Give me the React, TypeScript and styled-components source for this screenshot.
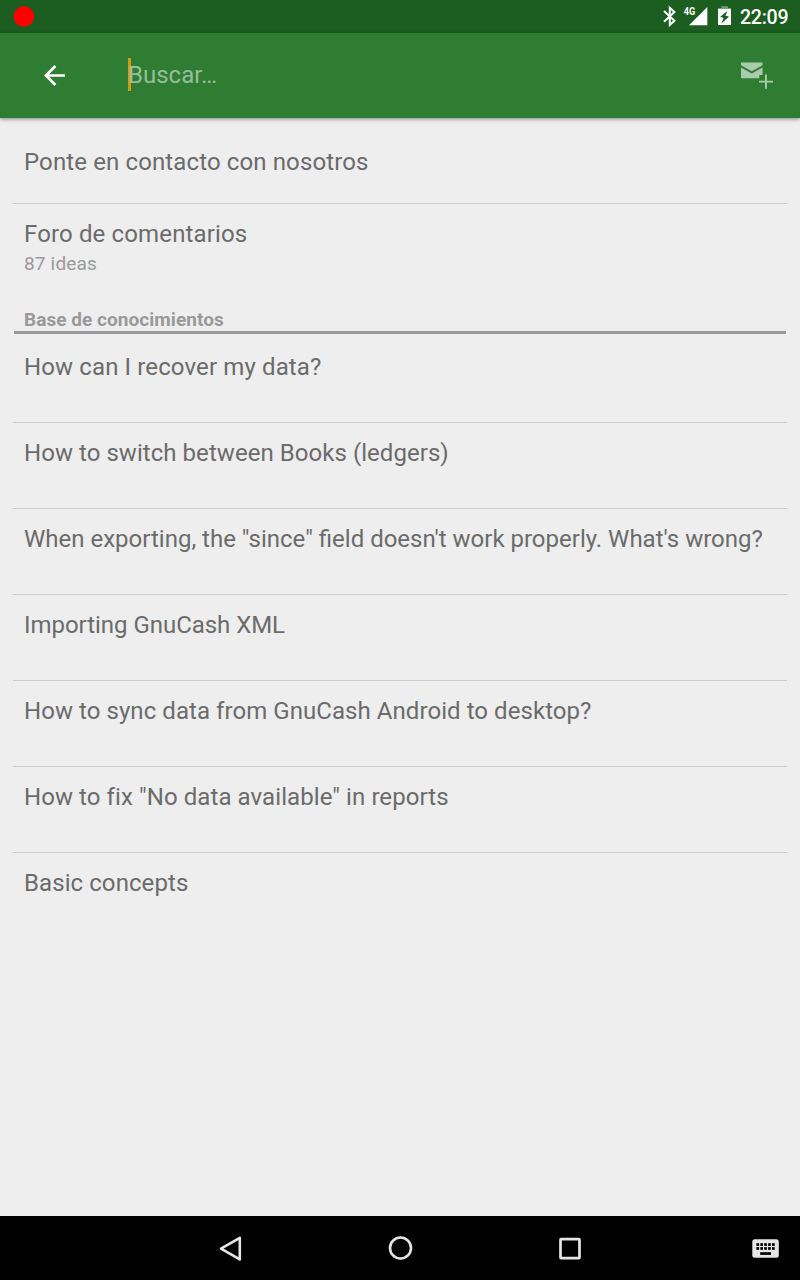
import React from "react";
import styled, { createGlobalStyle } from "styled-components";

const GlobalStyle = createGlobalStyle`
  * { box-sizing: border-box; }
  body { margin: 0; background: #eeeeee; font-family: Roboto, sans-serif; }
`;

const Screen = styled.div`
  display: flex;
  flex-direction: column;
  width: 800px;
  height: 1280px;
  overflow: hidden;
  background: #eeeeee;
`;

const StatusBar = styled.div`
  display: flex;
  align-items: center;
  flex: none;
  height: 33px;
  padding: 0 11px 0 13px;
  background: #1b5e20;
  color: #fff;
`;

const Icon = styled.svg`
  display: block;
  flex: none;
`;

const RecordDot = styled(Icon)`
  margin-right: auto;
`;

const Clock = styled.span`
  width: 49px;
  margin-left: 8px;
  font-size: 19.6px;
  font-weight: 500;
  letter-spacing: -0.3px;
  line-height: 33px;
  padding-top: 1px;
  white-space: nowrap;
`;

const Toolbar = styled.header`
  display: flex;
  align-items: center;
  flex: none;
  height: 85px;
  padding: 0 16px 0 32px;
  background: #2e7d32;
  box-shadow: 0 1px 4px rgba(0, 0, 0, 0.45);
`;

const IconButton = styled.button`
  display: block;
  padding: 0;
  border: 0;
  background: none;
`;

const SearchField = styled.div`
  flex: 1;
  height: 33px;
  margin: 0 0 2px 51px;
  border-left: 3px solid #d09c10;
  color: #97be99;
  font-size: 24px;
  line-height: 35px;
`;

const Placeholder = styled.span`
  display: block;
  margin-left: -3px;
`;

const Content = styled.main`
  flex: 1;
  padding: 14px 13px 0;
`;

const Row = styled.div<{ $height: number; $top?: number; $last?: boolean }>`
  height: ${(p) => p.$height}px;
  padding: ${(p) => p.$top ?? 14}px 11px 0;
  border-bottom: ${(p) => (p.$last ? "0" : "1px solid #cccccc")};
`;

const Title = styled.div<{ $tracking: number }>`
  color: #6b6b6b;
  font-size: 24px;
  letter-spacing: ${(p) => p.$tracking}px;
  line-height: 32px;
  white-space: nowrap;
`;

const Subtitle = styled.div`
  margin-top: 1px;
  color: #9a9a9a;
  font-size: 19px;
  letter-spacing: 0.18px;
  line-height: 26px;
`;

const SectionHeader = styled.h2`
  height: 30px;
  margin: 0 1px;
  padding: 2px 10px 0;
  border-bottom: 3px solid #999999;
  color: #999999;
  font-size: 19px;
  font-weight: 700;
  letter-spacing: 0.05px;
  line-height: 27px;
`;

const NavBar = styled.nav`
  display: flex;
  flex: none;
  height: 64px;
  padding: 0 3px 0 198px;
  background: #000;
`;

const NavButton = styled(IconButton)<{ $end?: boolean }>`
  width: 64px;
  height: 64px;
  margin-right: ${(p) => (p.$end ? 0 : 106)}px;
  margin-left: ${(p) => (p.$end ? "auto" : 0)};
`;

const articles = [
  { title: "How can I recover my data?", tracking: 0.12 },
  { title: "How to switch between Books (ledgers)", tracking: 0.05 },
  { title: "When exporting, the \"since\" field doesn't work properly. What's wrong?", tracking: 0 },
  { title: "Importing GnuCash XML", tracking: -0.04 },
  { title: "How to sync data from GnuCash Android to desktop?", tracking: 0.06 },
  { title: "How to fix \"No data available\" in reports", tracking: 0.08 },
  { title: "Basic concepts", tracking: 0.08 },
];

const keyColumns = [756.4, 760.3, 764.2, 768.1, 772];

export default function App() {
  return (
    <>
      <GlobalStyle />
      <Screen>
        <StatusBar>
          <RecordDot width="22" height="33" viewBox="13 0 22 33">
            <circle cx="23.9" cy="16.5" r="10.4" fill="#ff0000" />
          </RecordDot>
          <Icon width="72" height="33" viewBox="660 0 72 33">
            <path d="M664 11 L674.4 20.8 L669.8 25 V7.8 L674.4 12 L664 21.8" fill="none" stroke="#fff" strokeWidth="2" />
            <path d="M707.3 7 V25.2 H689 Z" fill="#fff" />
            <text x="683.8" y="15.3" fill="#fff" fontSize="10.4" fontWeight="700" fontFamily="Roboto, sans-serif" textLength="11.4" lengthAdjust="spacingAndGlyphs">4G</text>
            <path d="M721.5 6.3 H728 V8 H731 V12 H718 V8 H721.5 Z" fill="#fff" opacity="0.4" />
            <path d="M718 9 H731 V25 H718 Z M727.6 10.8 L720.2 16.8 L723.6 18 L721.3 23.5 L729 16.8 L725.4 15.6 Z" fill="#fff" fillRule="evenodd" />
          </Icon>
          <Clock>22:09</Clock>
        </StatusBar>
        <Toolbar>
          <IconButton aria-label="Volver">
            <Icon width="45" height="33" viewBox="32 59 45 33">
              <path d="M65 75.5 H46.5 M55.4 66 L45.9 75.5 L55.4 85" fill="none" stroke="#fff" strokeWidth="2.6" />
            </Icon>
          </IconButton>
          <SearchField>
            <Placeholder>Buscar…</Placeholder>
          </SearchField>
          <IconButton aria-label="Nuevo mensaje">
            <Icon width="48" height="48" viewBox="736 51.5 48 48">
              <g fill="#abcbad">
                <path d="M741 62 H762.5 V64.8 L751.8 70.8 L741 64.8 Z" />
                <path d="M741 67 L751.8 73 L762.5 67 V74.5 H759.3 V77.8 H741 Z" />
                <path d="M765 74 H766.9 V80.2 H773 V82 H766.9 V88.3 H765 V82 H759 V80.2 H765 Z" />
              </g>
            </Icon>
          </IconButton>
        </Toolbar>
        <Content>
          <Row $height={72}><Title $tracking={0.12}>Ponte en contacto con nosotros</Title></Row>
          <Row $height={100} $last>
            <Title $tracking={0.14}>Foro de comentarios</Title>
            <Subtitle>87 ideas</Subtitle>
          </Row>
          <SectionHeader>Base de conocimientos</SectionHeader>
          {articles.map(({ title, tracking }, i) => (
            <Row
              key={title}
              $height={i === 0 ? 89 : 86}
              $top={i === 0 ? 17 : 14}
              $last={i === articles.length - 1}
            >
              <Title $tracking={tracking}>{title}</Title>
            </Row>
          ))}
        </Content>
        <NavBar>
          <NavButton aria-label="Atrás">
            <Icon width="64" height="64" viewBox="198 1216 64 64">
              <path d="M239.8 1237.8 V1259.4 L221 1248.6 Z" fill="none" stroke="#e6e6e6" strokeWidth="2.6" strokeLinejoin="round" />
            </Icon>
          </NavButton>
          <NavButton aria-label="Inicio">
            <Icon width="64" height="64" viewBox="368 1216 64 64">
              <circle cx="400.5" cy="1248" r="10.5" fill="none" stroke="#e6e6e6" strokeWidth="2.6" />
            </Icon>
          </NavButton>
          <NavButton aria-label="Recientes">
            <Icon width="64" height="64" viewBox="538 1216 64 64">
              <rect x="560.5" y="1239.1" width="19" height="19" rx="0.6" fill="none" stroke="#e6e6e6" strokeWidth="2.7" />
            </Icon>
          </NavButton>
          <NavButton aria-label="Teclado" $end>
            <Icon width="64" height="64" viewBox="733 1216 64 64">
              <rect x="752.3" y="1239.2" width="26.5" height="18.6" rx="2.5" fill="#e6e6e6" />
              {keyColumns.map((x) => (
                <React.Fragment key={x}>
                  <rect x={x} y="1243.2" width="2.7" height="2.7" />
                  <rect x={x} y="1247.1" width="2.7" height="2.7" />
                </React.Fragment>
              ))}
              <rect x="760.2" y="1252.2" width="10.8" height="2.7" />
            </Icon>
          </NavButton>
        </NavBar>
      </Screen>
    </>
  );
}
